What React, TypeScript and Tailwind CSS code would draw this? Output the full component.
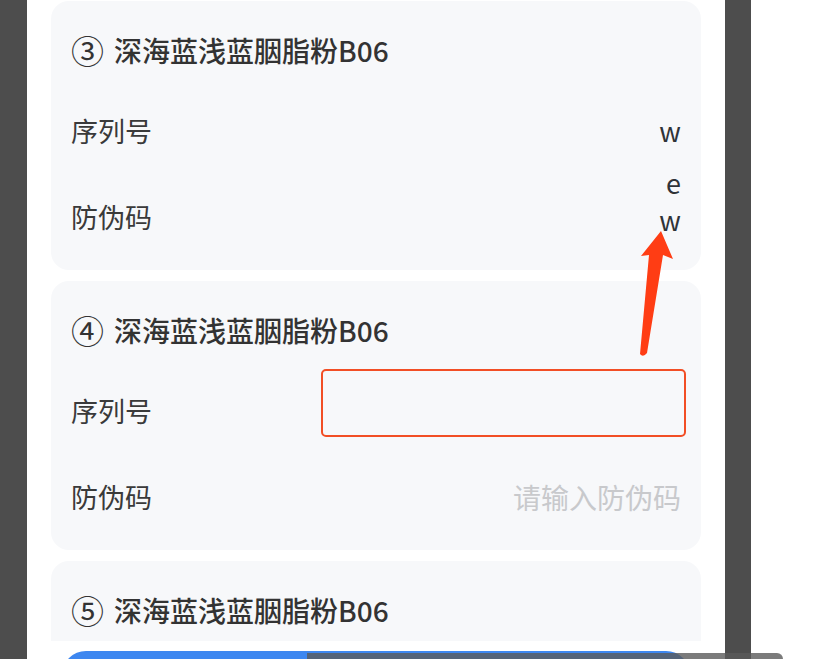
import React from "react";

type Row = { label: string; value?: string; wrap?: boolean; placeholder?: string };
type Item = { no: string; name: string; rows: Row[] };

const items: Item[] = [
  {
    no: "③",
    name: "深海蓝浅蓝胭脂粉B06",
    rows: [
      { label: "序列号", value: "w" },
      { label: "防伪码", value: "ew", wrap: true },
    ],
  },
  {
    no: "④",
    name: "深海蓝浅蓝胭脂粉B06",
    rows: [
      { label: "序列号", value: "" },
      { label: "防伪码", placeholder: "请输入防伪码" },
    ],
  },
  {
    no: "⑤",
    name: "深海蓝浅蓝胭脂粉B06",
    rows: [
      { label: "序列号", placeholder: "请输入序列号" },
      { label: "防伪码", placeholder: "请输入防伪码" },
    ],
  },
];

const font = { fontFamily: '"Noto Sans CJK SC", "Noto Sans", sans-serif' };

function FieldRow({ row }: { row: Row }) {
  return (
    <div className="flex h-[86px] items-center justify-between">
      <span className="text-[27px] text-[#3a3a3a]">{row.label}</span>
      {row.wrap ? (
        // narrow value column, wraps letter by letter
        <div className="mb-[33px] flex w-[22px] flex-col items-end text-[27px] leading-[37px] text-[#2f3338]">
          {row.value!.split("").map((c, i) => (
            <span key={i}>{c}</span>
          ))}
        </div>
      ) : row.value !== undefined ? (
        <span className="text-[27px] text-[#2f3338]">{row.value}</span>
      ) : (
        <span className="text-[28px] text-[#c8c9cc]">{row.placeholder}</span>
      )}
    </div>
  );
}

function ProductCard({ item }: { item: Item }) {
  return (
    <div className="shrink-0 rounded-[18px] bg-[#f7f8fa] px-5 pb-[10px] pt-7">
      <div className="flex h-[42px] items-center gap-[10px] text-[28px] font-medium leading-[42px] text-[#333333]">
        <span className="text-[33px] font-normal">{item.no}</span>
        <span>{item.name}</span>
      </div>
      <div className="mt-[17px]">
        {item.rows.map((r) => (
          <FieldRow key={r.label} row={r} />
        ))}
      </div>
    </div>
  );
}

export default function App() {
  return (
    <div className="relative flex h-[659px] w-[819px] overflow-hidden bg-white" style={font}>
      <div className="w-[27px] shrink-0 bg-[#4d4d4d]" />

      {/* phone page */}
      <div className="flex w-[698px] shrink-0 flex-col bg-white">
        <div className="flex h-[641px] shrink-0 flex-col gap-[11px] overflow-hidden px-6 pt-[1px]">
          {items.map((it) => (
            <ProductCard key={it.no} item={it} />
          ))}
        </div>
        <div className="shrink-0 px-[35px] pt-[10px]">
          <button className="h-[48px] w-full rounded-full bg-[#3d87f0] text-[26px] text-white">
            提交
          </button>
        </div>
      </div>

      <div className="w-[26px] shrink-0 bg-[#4d4d4d]" />
      <div className="flex-1 bg-white" />

      {/* annotation: red frame + arrow */}
      <div className="absolute left-[321px] top-[369px] h-[68px] w-[365px] rounded-[5px] border-2 border-[#f24e25]" />
      <svg className="absolute left-0 top-0" width="819" height="659" viewBox="0 0 819 659">
        <path
          d="M661 231 L673 259 L663 255 L647 353 Q643 358 640 354 L649 255 L641 256 Z"
          fill="#ff3d14"
        />
      </svg>

      {/* scrollbar overlay */}
      <div className="absolute left-[307px] top-[653px] h-[10px] w-[476px] rounded-tr-[6px] bg-[#5a5a5a]/80" />
    </div>
  );
}
